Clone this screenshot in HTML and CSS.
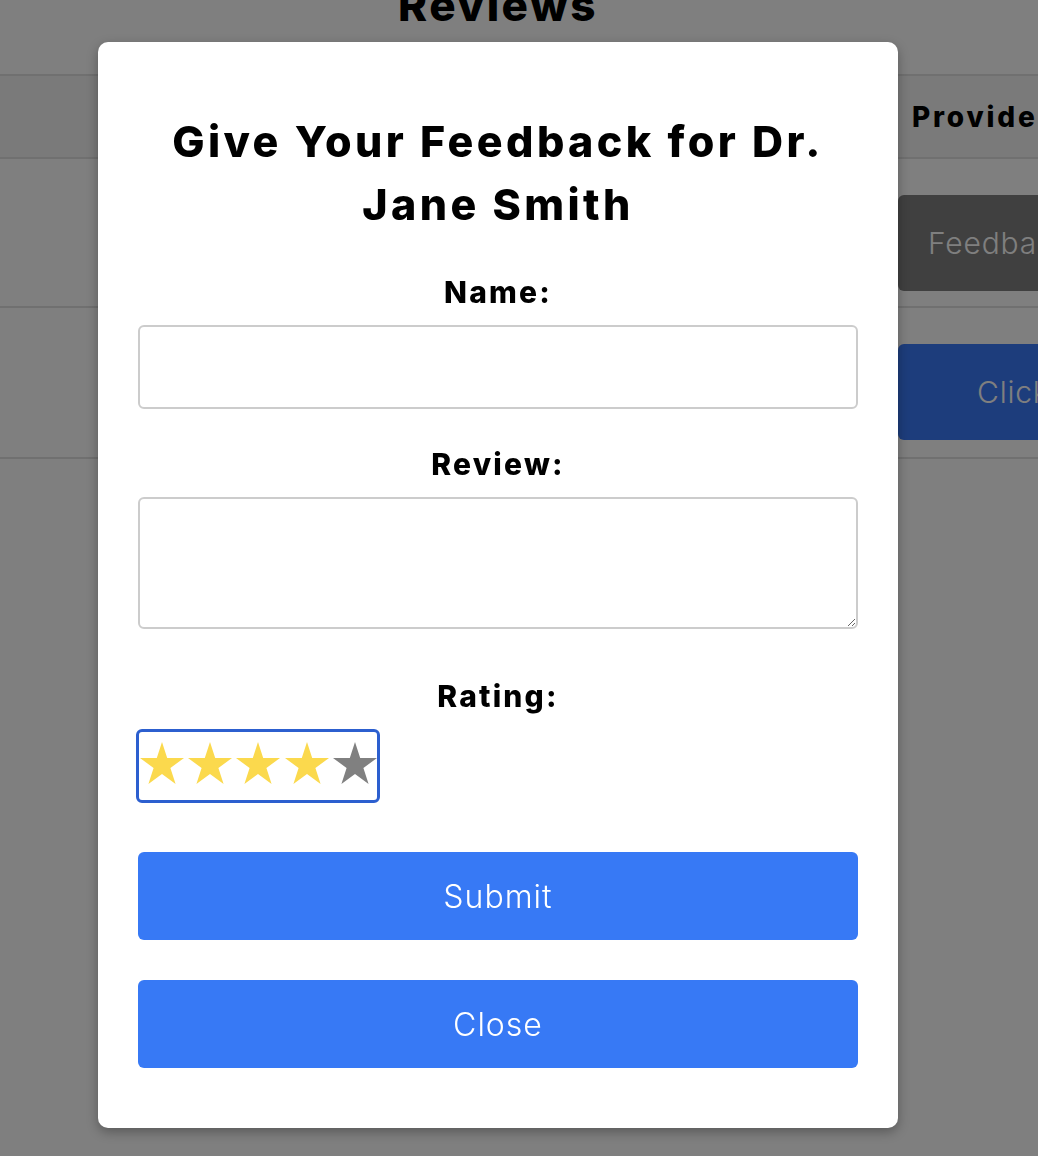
FILE: index.html
```html
<!DOCTYPE html>
<html lang="en">
<head>
<meta charset="utf-8">
<title>Reviews</title>
<link rel="stylesheet" href="styles.css">
</head>
<body>
<div class="page">
  <h1 class="page-title">Reviews</h1>
  <table class="reviews">
    <thead>
      <tr>
        <th class="col-main"></th>
        <th class="col-action">Provide Feedback</th>
      </tr>
    </thead>
    <tbody>
      <tr class="row-1">
        <td class="col-main"></td>
        <td class="col-action"><button class="btn-gray" type="button">Feedback Given</button></td>
      </tr>
      <tr class="row-2">
        <td class="col-main"></td>
        <td class="col-action"><button class="btn-blue" type="button">Click to Review</button></td>
      </tr>
    </tbody>
  </table>
</div>

<div class="overlay"></div>

<div class="modal">
  <h2 class="modal-title">Give Your Feedback for Dr. Jane Smith</h2>
  <form class="form">
    <label class="label" for="name">Name:</label>
    <input class="field" id="name" type="text">
    <label class="label label-review" for="review">Review:</label>
    <textarea class="field area" id="review"></textarea>
    <div class="label label-rating">Rating:</div>
    <div class="rating-row">
      <div class="rating" tabindex="0">
        <svg class="star on" viewBox="0 0 44 42"><polygon points="22,0 27.2,15.9 44,16 30.4,25.9 35.6,42 22,32.1 8.4,42 13.6,25.9 0,16 16.8,15.9"/></svg>
        <svg class="star on" viewBox="0 0 44 42"><polygon points="22,0 27.2,15.9 44,16 30.4,25.9 35.6,42 22,32.1 8.4,42 13.6,25.9 0,16 16.8,15.9"/></svg>
        <svg class="star on" viewBox="0 0 44 42"><polygon points="22,0 27.2,15.9 44,16 30.4,25.9 35.6,42 22,32.1 8.4,42 13.6,25.9 0,16 16.8,15.9"/></svg>
        <svg class="star on" viewBox="0 0 44 42"><polygon points="22,0 27.2,15.9 44,16 30.4,25.9 35.6,42 22,32.1 8.4,42 13.6,25.9 0,16 16.8,15.9"/></svg>
        <svg class="star off" viewBox="0 0 44 42"><polygon points="22,0 27.2,15.9 44,16 30.4,25.9 35.6,42 22,32.1 8.4,42 13.6,25.9 0,16 16.8,15.9"/></svg>
      </div>
    </div>
    <button class="btn-primary btn-submit" type="button">Submit</button>
    <button class="btn-primary btn-close" type="button">Close</button>
  </form>
</div>
</body>
</html>
```
FILE: styles.css
```css
html, body {
  margin: 0;
  padding: 0;
  background: #ffffff;
  overflow: hidden;
}

body {
  width: 1038px;
  height: 1156px;
  font-family: Inter, "Noto Sans", sans-serif;
  color: #000;
}

.page {
  width: 996px;
}

.page-title {
  margin: -19px 0 45px;
  font-size: 44px;
  line-height: 48px;
  font-weight: 800;
  letter-spacing: 2.4px;
  text-align: center;
}

.reviews {
  border-collapse: collapse;
  width: 1300px;
}

.reviews th,
.reviews td {
  border-top: 2px solid #e0e0e0;
  border-bottom: 2px solid #e0e0e0;
  padding: 0;
  text-align: left;
}

.reviews thead tr {
  background: #f5f5f5;
  height: 83px;
}

.reviews th {
  font-size: 28px;
  font-weight: 800;
  letter-spacing: 2.8px;
}

.col-main {
  width: 898px;
}

.reviews th.col-action {
  padding-left: 14px;
  white-space: nowrap;
}

.reviews td {
  vertical-align: top;
  padding-top: 36px;
}

.row-1 { height: 149px; }
.row-2 { height: 151px; }

.btn-gray,
.btn-blue {
  display: block;
  width: 300px;
  height: 96px;
  border: none;
  border-radius: 6px;
  color: #fff;
  font-family: inherit;
  font-size: 30px;
  font-weight: 300;
  letter-spacing: 0.8px;
  text-align: left;
  white-space: nowrap;
}

.btn-gray {
  background: #808080;
  padding-left: 30px;
}

.btn-blue {
  background: #3a7af8;
  padding-left: 79px;
}

.overlay {
  position: fixed;
  inset: 0;
  background: rgba(0, 0, 0, 0.5);
}

.modal {
  position: absolute;
  left: 98px;
  top: 42px;
  width: 800px;
  box-sizing: border-box;
  padding: 68px 40px 60px;
  background: #fff;
  border-radius: 10px;
  box-shadow: 0 4px 12px rgba(0, 0, 0, 0.3);
}

.modal-title {
  margin: 0 0 35px;
  font-size: 43px;
  line-height: 63px;
  font-weight: 800;
  letter-spacing: 3.4px;
  text-align: center;
}

.form {
  display: flex;
  flex-direction: column;
}

.label {
  display: block;
  font-size: 30px;
  line-height: 42px;
  font-weight: 800;
  letter-spacing: 2.2px;
  text-align: center;
  margin-bottom: 12px;
}

.label-review {
  margin-top: 34px;
}

.label-rating {
  margin-top: 46px;
}

.field {
  box-sizing: border-box;
  width: 720px;
  height: 84px;
  margin: 0;
  border: 2px solid #cccccc;
  border-radius: 6px;
  font-family: inherit;
  font-size: 24px;
  padding: 8px 12px;
  background: #fff;
  outline: none;
}

.area {
  height: 132px;
  resize: vertical;
}

.rating-row {
  display: flex;
  margin-left: -2px;
}

.rating {
  display: flex;
  gap: 4.2px;
  padding: 10px 0 13px 1px;
  border: 3px solid #2c5fcf;
  border-radius: 6px;
  width: 244px;
  box-sizing: border-box;
  height: 74px;
  outline: none;
}

.star {
  width: 44px;
  height: 42px;
  flex: none;
}

.star.on polygon { fill: #fbd94d; }
.star.off polygon { fill: #808080; }

.btn-primary {
  display: block;
  width: 720px;
  height: 88px;
  border: none;
  border-radius: 6px;
  background: #3779f5;
  color: #fff;
  font-family: inherit;
  font-size: 32px;
  font-weight: 300;
  letter-spacing: 1px;
  cursor: pointer;
}

.btn-submit {
  margin-top: 49px;
}

.btn-close {
  margin-top: 40px;
}
```
